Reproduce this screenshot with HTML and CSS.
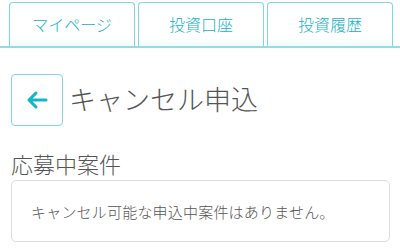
FILE: index.html
```html
<!DOCTYPE html>
<html lang="ja">
<head>
<meta charset="utf-8">
<link rel="stylesheet" href="styles.css">
</head>
<body>
<nav class="tabs">
  <a class="tab">マイページ</a>
  <a class="tab">投資口座</a>
  <a class="tab">投資履歴</a>
</nav>
<div class="title-row">
  <button class="back" aria-label="戻る">
    <svg width="22" height="20" viewBox="0 0 22 20"><path d="M20 10H3M10 3L3 10L10 17" fill="none" stroke="#12b5c9" stroke-width="3" stroke-linecap="round" stroke-linejoin="round"/></svg>
  </button>
  <h1 class="title">キャンセル申込</h1>
</div>
<h2 class="section">応募中案件</h2>
<div class="box">キャンセル可能な申込中案件はありません。</div>
</body>
</html>
```
FILE: styles.css
```css
html, body { margin: 0; padding: 0; background: #fff; }
body { font-family: "Noto Sans CJK JP", "Noto Sans", sans-serif; font-weight: 300; color: #555; width: 400px; height: 248px; overflow: hidden; }
.tabs { display: flex; gap: 3px; padding: 2px 7px 0 9px; border-bottom: 2px solid #8fdde6; }
.tab { flex: 1; height: 44px; box-sizing: border-box; border: 1px solid #80d8e2; border-bottom: none; border-radius: 4px 4px 0 0; display: flex; align-items: center; justify-content: center; color: #16b2c8; font-size: 16px; padding-bottom: 2px; background: linear-gradient(#fff 80%, #f2fbfc); }
.title-row { display: flex; align-items: center; gap: 6px; margin: 26px 0 0 11px; }
.back { width: 52px; height: 52px; box-sizing: border-box; border: 1px solid #80d8e2; border-radius: 4px; background: #fff; display: flex; align-items: center; justify-content: center; padding: 0; }
.title { margin: 0 0 4px; font-size: 27px; font-weight: 300; color: #555; line-height: 1; }
.section { margin: 22px 0 0 11px; font-size: 22px; font-weight: 300; color: #555; line-height: 30px; }
.box { margin: 2px 10px 0 11px; height: 62px; box-sizing: border-box; border: 1px solid #ddd; border-radius: 5px; padding: 0 19px; display: flex; align-items: center; font-size: 15px; letter-spacing: 0.2px; color: #555; }
```
